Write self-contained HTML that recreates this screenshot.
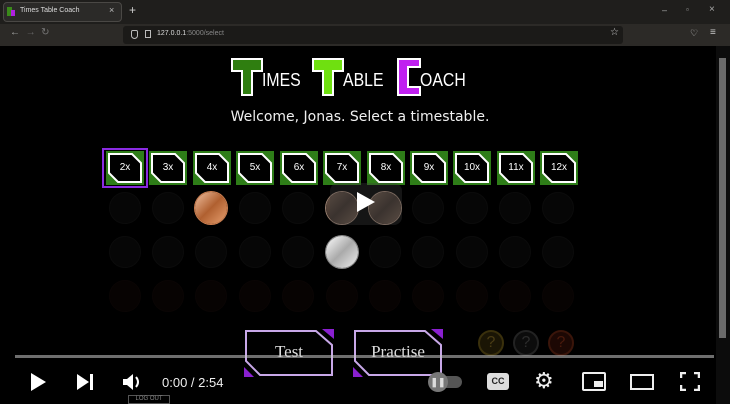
<!DOCTYPE html>
<html><head><meta charset="utf-8"><style>
*{margin:0;padding:0;box-sizing:border-box}
body{width:730px;height:404px;overflow:hidden;background:#000;font-family:"Liberation Sans",sans-serif;position:relative;color:#fff}
.a{position:absolute}
.btn{position:absolute;top:151px;width:38px;height:34px}
.btn span{position:absolute;left:0;top:0;width:100%;line-height:34px;text-align:center;font-size:10px;color:#fff}
.coin{position:absolute;width:32px;height:32px;border-radius:50%}
.dim{background:#060606;border:1px solid #0b0b0b}
.dimr{background:#070302;border:1px solid #0a0504}
.lg{position:absolute;top:70px;font-size:18px;transform:scaleX(.88);transform-origin:left}
</style></head><body>
<div class="a" style="left:0;top:0;width:730px;height:24px;background:#1f1e1c"></div>
<div class="a" style="left:3px;top:2px;width:119px;height:20px;background:#2b2a28;border:1px solid #4a4845;border-radius:4px"></div>
<div class="a" style="left:7px;top:7px;width:5px;height:9px;background:#3a8a1a"></div>
<div class="a" style="left:11px;top:10px;width:4px;height:6px;background:#b020e0"></div>
<div class="a" style="left:20px;top:7px;font-size:7px;color:#ddd">Times Table Coach</div>
<div class="a" style="left:109px;top:5px;font-size:9px;color:#bbb">×</div>
<div class="a" style="left:129px;top:3px;font-size:12px;color:#ccc">+</div>
<div class="a" style="left:662px;top:5px;font-size:9px;color:#aaa">–</div>
<div class="a" style="left:686px;top:5px;font-size:8px;color:#aaa">▫</div>
<div class="a" style="left:709px;top:4px;font-size:10px;color:#aaa">×</div>
<div class="a" style="left:0;top:24px;width:730px;height:22px;background:#2c2a27"></div>
<div class="a" style="left:10px;top:27px;font-size:10px;color:#aaa">←&nbsp; <span style="color:#666">→</span>&nbsp; <span style="color:#777">↻</span></div>
<div class="a" style="left:123px;top:26px;width:500px;height:18px;background:#1b1a18;border-radius:3px"></div>
<div class="a" style="left:131px;top:30px;width:7px;height:9px;border:1px solid #bbb;border-radius:2px 2px 4px 4px"></div>
<div class="a" style="left:145px;top:30px;width:6px;height:8px;border:1px solid #bbb"></div>
<div class="a" style="left:157px;top:30px;font-size:7px;color:#ddd">127.0.0.1<span style="color:#888">:5000/select</span></div>
<div class="a" style="left:610px;top:27px;font-size:10px;color:#ccc">☆</div>
<div class="a" style="left:690px;top:28px;font-size:9px;color:#ccc">♡</div>
<div class="a" style="left:710px;top:27px;font-size:10px;color:#ccc">≡</div>
<div class="a" style="left:716px;top:46px;width:14px;height:358px;background:#0c0c0c"></div>
<div class="a" style="left:719px;top:58px;width:7px;height:280px;background:#6a6a6a"></div>

<svg class="a" style="left:231px;top:58px" width="32" height="38"><polygon points="1,1 31,1 31,13 21,13 21,37 11,37 11,13 1,13" fill="#2f7e10" stroke="#fff" stroke-width="2"/></svg>
<div class="lg" style="left:262px">IMES</div>
<svg class="a" style="left:312px;top:58px" width="32" height="38"><polygon points="1,1 31,1 31,13 21,13 21,37 11,37 11,13 1,13" fill="#6fe010" stroke="#fff" stroke-width="2"/></svg>
<div class="lg" style="left:343px">ABLE</div>
<svg class="a" style="left:397px;top:58px" width="24" height="38"><polygon points="1,1 23,1 23,9 11,9 11,29 23,29 23,37 1,37" fill="#c020f0" stroke="#fff" stroke-width="2"/></svg>
<div class="lg" style="left:420px">OACH</div>
<div class="a" style="left:0;top:109px;width:720px;text-align:center;font-size:14px;color:#f0f0f0;font-family:'DejaVu Sans',sans-serif">Welcome, Jonas. Select a timestable.</div>

<div class="a" style="left:102px;top:148px;width:46px;height:40px;border:2px solid #8a2be2"></div>
<div id="btns"></div>
<script>
var xs=[106,149,193,236,280,323,367,410,453,497,540],L=['2x','3x','4x','5x','6x','7x','8x','9x','10x','11x','12x'],h='';
for(var i=0;i<11;i++){h+='<div class="btn" style="left:'+xs[i]+'px"><svg width="38" height="34"><rect width="38" height="34" fill="#2e7d18"/><polygon points="3,3 26,3 35,12 35,31 12,31 3,22" fill="#000" stroke="#fff" stroke-width="2"/></svg><span>'+L[i]+'</span></div>';}
var cx=[109,152,195,239,282,326,369,412,456,499,542];
for(var r=0;r<3;r++)for(var i=0;i<11;i++){var y=[192,236,280][r];var c=r==2?'dimr':'dim';
 if(r==0&&i==2)h+='<div class="coin" style="left:'+cx[i]+'px;top:'+y+'px;background:linear-gradient(135deg,#f0c0a0,#b06030 50%,#e8a070);box-shadow:0 0 0 1px #d08050"></div>';
 else if(r==0&&(i==5||i==6))h+='<div class="coin" style="left:'+cx[i]+'px;top:'+y+'px;background:linear-gradient(135deg,#6a5548,#3a2e28 50%,#6a5548);box-shadow:0 0 0 1px #9a8070"></div>';
 else if(r==1&&i==5)h+='<div class="coin" style="left:'+cx[i]+'px;top:'+y+'px;background:linear-gradient(135deg,#fff,#aaa 50%,#eee);box-shadow:0 0 0 1px #888"></div>';
 else h+='<div class="coin '+c+'" style="left:'+cx[i]+'px;top:'+y+'px"></div>';}
document.getElementById('btns').innerHTML=h;
</script>
<div class="a" style="left:330px;top:183px;width:72px;height:42px;background:rgba(60,60,60,.35);border-radius:8px"></div>
<div class="a" style="left:357px;top:192px;width:0;height:0;border-left:18px solid #fff;border-top:10px solid transparent;border-bottom:10px solid transparent"></div>

<svg class="a" style="left:244px;top:329px" width="90" height="48"><polygon points="2,2 72,2 88,16 88,46 16,46 2,32" fill="#000" stroke="#c8a8e8" stroke-width="2"/><polygon points="78,0 90,0 90,10" fill="#8a20d0"/><polygon points="0,38 0,48 10,48" fill="#8a20d0"/></svg>
<svg class="a" style="left:353px;top:329px" width="90" height="48"><polygon points="2,2 72,2 88,16 88,46 16,46 2,32" fill="#000" stroke="#c8a8e8" stroke-width="2"/><polygon points="78,0 90,0 90,10" fill="#8a20d0"/><polygon points="0,38 0,48 10,48" fill="#8a20d0"/></svg>
<div class="a" style="left:244px;top:342px;width:90px;text-align:center;font-family:'Liberation Serif',serif;font-size:17px;color:#ddd">Test</div>
<div class="a" style="left:353px;top:342px;width:90px;text-align:center;font-family:'Liberation Serif',serif;font-size:17px;color:#ddd">Practise</div>
<div class="a" style="left:478px;top:330px;width:26px;height:26px;border-radius:50%;background:#1a1505;border:2px solid #3a300c;color:#4a3c14;text-align:center;font-size:16px;line-height:22px">?</div>
<div class="a" style="left:513px;top:330px;width:26px;height:26px;border-radius:50%;background:#0c0c0c;border:2px solid #222;color:#2c2c2c;text-align:center;font-size:16px;line-height:22px">?</div>
<div class="a" style="left:548px;top:330px;width:26px;height:26px;border-radius:50%;background:#1c0804;border:2px solid #3a150a;color:#4a1a0c;text-align:center;font-size:16px;line-height:22px">?</div>

<div class="a" style="left:15px;top:355px;width:699px;height:3px;background:rgba(200,200,200,.55)"></div>
<div class="a" style="left:31px;top:373px;width:0;height:0;border-left:15px solid #fff;border-top:9px solid transparent;border-bottom:9px solid transparent"></div>
<div class="a" style="left:77px;top:374px;width:0;height:0;border-left:12px solid #fff;border-top:8px solid transparent;border-bottom:8px solid transparent"></div>
<div class="a" style="left:90px;top:374px;width:3px;height:16px;background:#fff"></div>
<svg class="a" style="left:121px;top:372px" width="22" height="20"><polygon points="2,7 6,7 12,2 12,18 6,13 2,13" fill="#fff"/><path d="M15,5 Q19,10 15,15" stroke="#fff" stroke-width="2" fill="none"/></svg>
<div class="a" style="left:162px;top:375px;font-size:13px;color:#eee">0:00 / 2:54</div>
<div class="a" style="left:430px;top:376px;width:32px;height:12px;border-radius:6px;background:#555"></div>
<div class="a" style="left:428px;top:372px;width:20px;height:20px;border-radius:50%;background:#777;color:#ddd;font-size:9px;text-align:center;line-height:20px;font-weight:bold">❚❚</div>
<div class="a" style="left:487px;top:373px;width:22px;height:17px;border-radius:3px;background:#ddd;color:#222;font-size:9px;font-weight:bold;text-align:center;line-height:17px">CC</div>
<div class="a" style="left:534px;top:368px;font-size:22px;color:#eee">⚙</div>
<div class="a" style="left:582px;top:372px;width:24px;height:19px;border:2px solid #eee;border-radius:2px"></div>
<div class="a" style="left:594px;top:381px;width:9px;height:6px;background:#eee"></div>
<div class="a" style="left:630px;top:374px;width:24px;height:16px;border:2px solid #eee"></div>
<svg class="a" style="left:680px;top:372px" width="20" height="19"><path d="M1,6V1H6M14,1H19V6M19,13V18H14M6,18H1V13" stroke="#eee" stroke-width="2.5" fill="none"/></svg>
<div class="a" style="left:128px;top:395px;width:42px;height:9px;border:1px solid #555;font-size:6px;color:#888;text-align:center">LOG OUT</div>
</body></html>
